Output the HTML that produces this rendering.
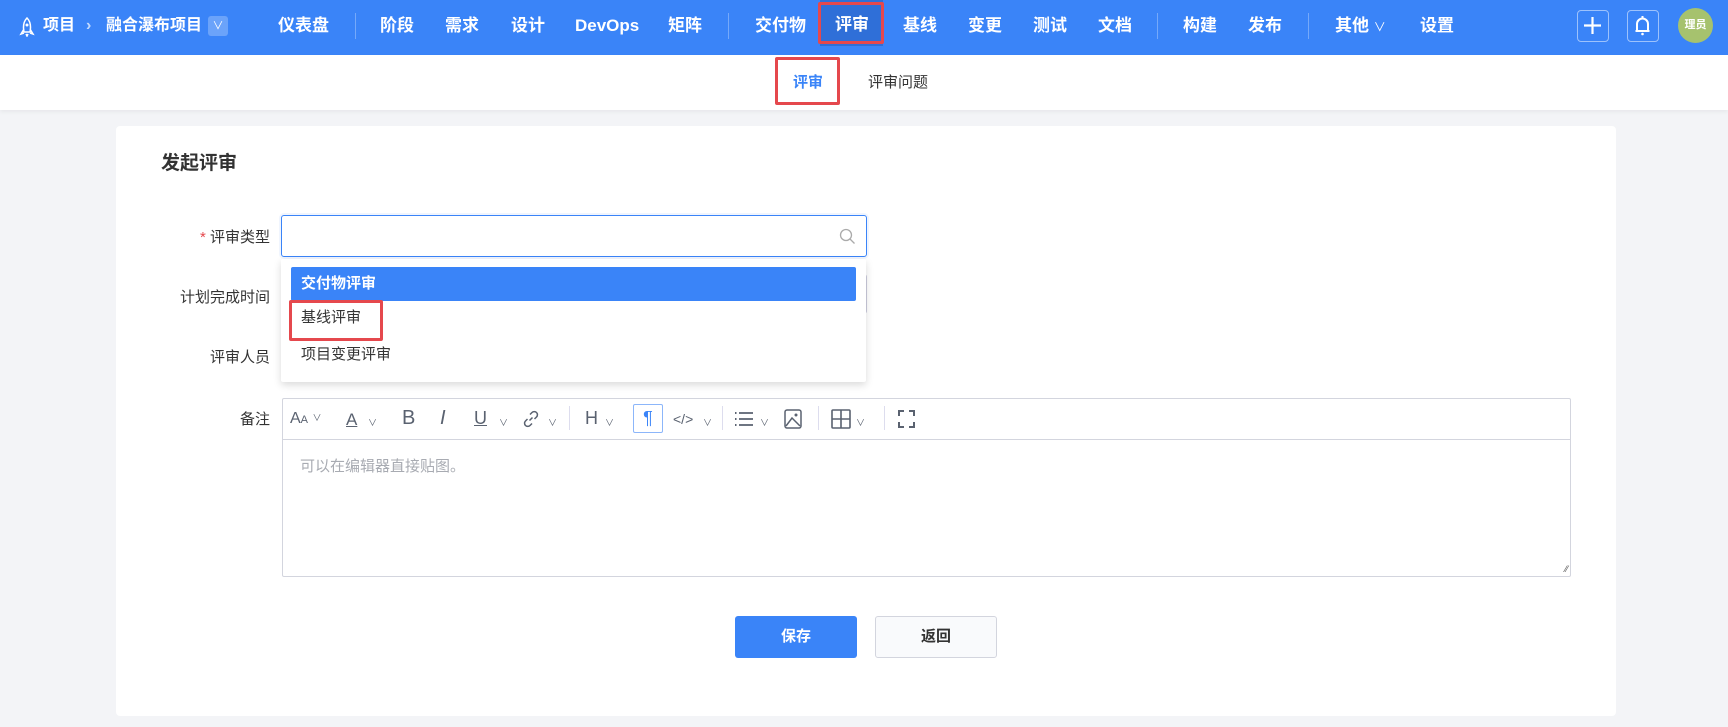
<!DOCTYPE html>
<html><head><meta charset="utf-8"><style>
*{margin:0;padding:0;box-sizing:border-box}
body{width:1728px;height:727px;overflow:hidden;background:#f3f4f7;font-family:"Liberation Sans","Noto Sans CJK SC",sans-serif;color:#333;position:relative}
.abs{position:absolute}
.nav{left:0;top:0;width:1728px;height:55px;background:#3a84f8}
.ni{position:absolute;top:0;line-height:52px;color:#fff;font-size:17px;font-weight:bold;white-space:nowrap}
.sep{position:absolute;top:13px;width:1px;height:26px;background:rgba(255,255,255,.3)}
.sub{left:0;top:55px;width:1728px;height:55px;background:#fff;box-shadow:0 2px 4px rgba(0,0,0,.05)}
.card{left:116px;top:126px;width:1500px;height:590px;background:#fff;border-radius:4px}
.lbl{position:absolute;font-size:15px;color:#333;text-align:right;width:200px;left:70px}
.rb{position:absolute;border:3px solid #e5484d;border-radius:2px}
.tb{position:absolute;top:410px;color:#5a6270;font-size:16px}
.tsep{position:absolute;top:406px;width:1px;height:24px;background:#dde}
.cv{font-size:9px;vertical-align:2px}
</style></head><body>
<div class="abs nav">
 <svg class="abs" style="left:19px;top:17px" width="16" height="20" viewBox="0 0 16 20"><path d="M8 1 C4 5 4 10 5 15 L11 15 C12 10 12 5 8 1Z M5 12 L2 17 L5 16 M11 12 L14 17 L11 16 M7 17 L8 19 L9 17" fill="none" stroke="#fff" stroke-width="1.5"/><circle cx="8" cy="8" r="1.5" fill="#fff"/></svg>
 <div class="ni" style="left:43px;font-size:16px">项目</div>
 <div class="ni" style="left:86px;font-size:16px;opacity:.7">›</div>
 <div class="ni" style="left:106px;font-size:16px">融合瀑布项目</div>
 <div class="abs" style="left:208px;top:16px;width:20px;height:20px;background:rgba(255,255,255,.25);border-radius:3px;color:#fff;font-size:11px;text-align:center;line-height:20px">∨</div>
 <div class="ni" style="left:278px">仪表盘</div>
 <div class="sep" style="left:355px"></div>
 <div class="ni" style="left:380px">阶段</div>
 <div class="ni" style="left:445px">需求</div>
 <div class="ni" style="left:511px">设计</div>
 <div class="ni" style="left:575px">DevOps</div>
 <div class="ni" style="left:668px">矩阵</div>
 <div class="sep" style="left:728px"></div>
 <div class="ni" style="left:755px">交付物</div>
 <div class="abs" style="left:820px;top:0;width:63px;height:46px;background:#2f6fd8"></div>
 <div class="rb" style="left:818px;top:2px;width:66px;height:42px"></div>
 <div class="ni" style="left:835px;line-height:50px">评审</div>
 <div class="ni" style="left:903px">基线</div>
 <div class="ni" style="left:968px">变更</div>
 <div class="ni" style="left:1033px">测试</div>
 <div class="ni" style="left:1098px">文档</div>
 <div class="sep" style="left:1157px"></div>
 <div class="ni" style="left:1183px">构建</div>
 <div class="ni" style="left:1248px">发布</div>
 <div class="sep" style="left:1308px"></div>
 <div class="ni" style="left:1335px">其他 <span style="font-size:12px;font-weight:normal">∨</span></div>
 <div class="ni" style="left:1420px">设置</div>
 <div class="abs" style="left:1577px;top:10px;width:32px;height:32px;border:1.5px solid rgba(255,255,255,.5);border-radius:4px"><svg width="29" height="29" viewBox="0 0 29 29"><path d="M14.5 6V23M6 14.5H23" stroke="#fff" stroke-width="2.2"/></svg></div>
 <div class="abs" style="left:1627px;top:10px;width:32px;height:32px;border:1.5px solid rgba(255,255,255,.5);border-radius:4px"><svg width="29" height="29" viewBox="0 0 29 29"><path d="M9 20V13a5.5 5.5 0 0 1 11 0V20Z M7.5 20H21.5 M14.5 5V7.5" fill="none" stroke="#fff" stroke-width="2"/><circle cx="14.5" cy="23" r="1.3" fill="#fff"/></svg></div>
 <div class="abs" style="left:1678px;top:8px;width:35px;height:35px;border-radius:50%;background:#a6c26e;color:#fff;font-size:11px;font-weight:bold;text-align:center;line-height:35px">理员</div>
</div>
<div class="abs sub">
 <div class="rb" style="left:775px;top:2px;width:65px;height:48px"></div>
 <div class="abs" style="left:793px;top:0;line-height:55px;font-size:15px;font-weight:bold;color:#3a84f8">评审</div>
 <div class="abs" style="left:868px;top:0;line-height:55px;font-size:15px;color:#333">评审问题</div>
</div>
<div class="abs card"></div>
<div class="abs" style="left:161px;top:148px;font-size:19px;font-weight:bold;color:#333">发起评审</div>
<div class="lbl" style="top:226px"><span style="color:#e5484d">* </span>评审类型</div>
<div class="lbl" style="top:286px">计划完成时间</div>
<div class="lbl" style="top:346px">评审人员</div>
<div class="lbl" style="top:408px">备注</div>
<div class="abs" style="left:281px;top:215px;width:586px;height:42px;border:1px solid #3a84f8;border-radius:3px;background:#fff;box-shadow:0 0 0 2px rgba(58,132,248,.08)">
 <svg class="abs" style="right:10px;top:12px" width="17" height="17" viewBox="0 0 17 17"><circle cx="7" cy="7" r="5.5" fill="none" stroke="#aaa" stroke-width="1.3"/><path d="M11 11L15.5 15.5" stroke="#aaa" stroke-width="1.3"/></svg>
</div>
<div class="abs" style="left:281px;top:274px;width:586px;height:40px;border:1px solid #ccd;border-radius:3px"></div>
<div class="abs" style="left:281px;top:259px;width:585px;height:123px;background:#fff;box-shadow:0 3px 8px rgba(0,0,0,.15);border-radius:2px">
 <div class="abs" style="left:10px;top:8px;width:565px;height:34px;background:#3a84f8;border-radius:2px;color:#fff;font-size:15px;font-weight:bold;line-height:34px;padding-left:10px">交付物评审</div>
 <div class="abs" style="left:20px;top:48px;font-size:15px;line-height:22px">基线评审</div>
 <div class="abs" style="left:20px;top:85px;font-size:15px;line-height:22px">项目变更评审</div>
</div>
<div class="rb" style="left:289px;top:300px;width:94px;height:41px"></div>
<div class="abs" style="left:282px;top:398px;width:1289px;height:179px;border:1.5px solid #d3d5de;border-radius:2px;background:#fff">
 <div style="height:41px;border-bottom:1.5px solid #d3d5de"></div>
 <div class="abs" style="left:17px;top:56px;font-size:15px;color:#a8abb2">可以在编辑器直接贴图。</div>
 <div class="abs" style="right:2px;bottom:2px;font-size:9px;color:#555">⁄⁄</div>
</div>
<div class="tb" style="left:290px;font-size:16px">A<span style="font-size:11px">A</span> <span class="cv">∨</span></div>
<div class="tb" style="left:346px;text-decoration:underline;font-size:17px">A</div><div class="tb cv" style="left:368px;top:416px">∨</div>
<div class="tb" style="left:402px;font-weight:normal;font-size:20px;top:407px">B</div>
<div class="tb" style="left:440px;font-style:italic;font-size:20px;top:407px">I</div>
<div class="tb" style="left:474px;text-decoration:underline;font-size:18px;top:408px">U</div><div class="tb cv" style="left:499px;top:416px">∨</div>
<svg class="abs" style="left:522px;top:410px" width="18" height="18" viewBox="0 0 18 18"><path d="M7.5 10.5L10.5 7.5M8 4.5l2-2a3 3 0 0 1 4.5 4.5l-2 2M10 13.5l-2 2A3 3 0 0 1 3.5 11l2-2" fill="none" stroke="#5a6270" stroke-width="1.5"/></svg><div class="tb cv" style="left:548px;top:416px">∨</div>
<div class="tsep" style="left:569px"></div>
<div class="tb" style="left:585px;font-size:18px;top:408px">H</div><div class="tb cv" style="left:605px;top:416px">∨</div>
<div class="abs" style="left:633px;top:404px;width:30px;height:29px;border:1.5px solid #8cb6fa;border-radius:2px;color:#3a84f8;text-align:center;line-height:26px;font-size:18px">¶</div>
<div class="tb" style="left:673px;font-size:14px;top:411px">&lt;/&gt;</div><div class="tb cv" style="left:703px;top:416px">∨</div>
<div class="tsep" style="left:722px"></div>
<svg class="abs" style="left:734px;top:411px" width="20" height="16" viewBox="0 0 20 16"><path d="M5 2H19M5 8H19M5 14H19" stroke="#5a6270" stroke-width="1.8"/><path d="M1 2H2.5M1 8H2.5M1 14H2.5" stroke="#5a6270" stroke-width="2"/></svg><div class="tb cv" style="left:760px;top:416px">∨</div>
<svg class="abs" style="left:784px;top:409px" width="18" height="20" viewBox="0 0 18 20"><rect x="1" y="1" width="16" height="18" rx="2" fill="none" stroke="#5a6270" stroke-width="1.5"/><path d="M2 17L8 9L16 17" fill="none" stroke="#5a6270" stroke-width="1.5"/><circle cx="12" cy="6" r="1.5" fill="#5a6270"/></svg>
<div class="tsep" style="left:818px"></div>
<svg class="abs" style="left:831px;top:409px" width="20" height="20" viewBox="0 0 20 20"><rect x="1" y="1" width="18" height="18" rx="1" fill="none" stroke="#5a6270" stroke-width="1.6"/><path d="M1 10H19M10 1V19" stroke="#5a6270" stroke-width="1.6"/></svg>
<div class="tb cv" style="left:856px;top:416px">∨</div>
<div class="tsep" style="left:884px"></div>
<svg class="abs" style="left:898px;top:410px" width="17" height="18" viewBox="0 0 17 18"><path d="M1 6V1H6M11 1H16V6M16 12V17H11M6 17H1V12" fill="none" stroke="#5a6270" stroke-width="2"/></svg>
<div class="abs" style="left:735px;top:616px;width:122px;height:42px;background:#3a84f8;border-radius:3px;color:#fff;font-size:15px;font-weight:bold;text-align:center;line-height:42px">保存</div>
<div class="abs" style="left:875px;top:616px;width:122px;height:42px;background:#f9fafc;border:1.5px solid #d3d5de;border-radius:3px;color:#333;font-size:15px;font-weight:bold;text-align:center;line-height:39px">返回</div>
</body></html>
